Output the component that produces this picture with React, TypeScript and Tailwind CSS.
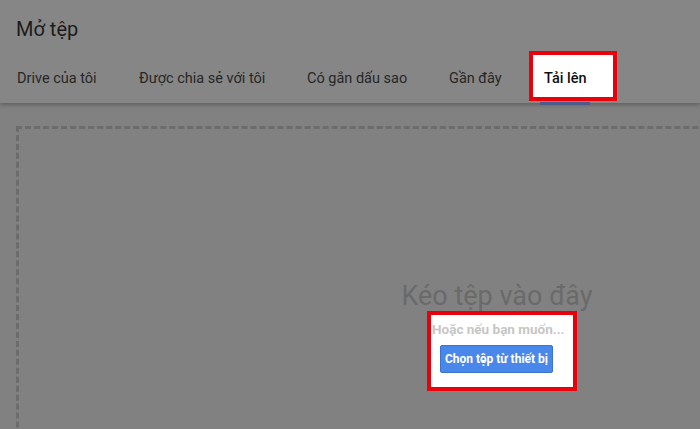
import React from "react";

export default function App() {
  const tabs: [string, string][] = [
    ["Drive của tôi", "w-[122px]"],
    ["Được chia sẻ với tôi", "w-[168px]"],
    ["Có gắn dấu sao", "w-[142px]"],
    ["Gần đây", "w-[80px]"],
  ];
  return (
    <div
      className="relative w-[700px] h-[429px] overflow-hidden bg-[#818181]"
      style={{ fontFamily: "Roboto, 'Noto Sans', sans-serif" }}
    >
      <div className="relative z-10 h-[103px] bg-[#868686] shadow-[0_2px_4px_rgba(0,0,0,0.25)]">
        <div className="pl-4 pt-[14px] h-[60px] text-[20px] leading-[30px] text-[#1c1c1c]">Mở tệp</div>
        <div className="flex items-start pl-[17px] text-[14.5px] leading-[20px] text-[#262626]">
          {tabs.map(([t, w]) => (
            <div key={t} className={`pt-[9px] shrink-0 ${w}`}>{t}</div>
          ))}
          <div className="relative mt-[-9px] w-[88px] h-[50px] border-4 border-[#e8000b] bg-white flex justify-start pl-[11px] shrink-0">
            <span className="pt-[14px] font-medium text-[#111]">Tải lên</span>
            <div className="absolute left-[7px] top-[47px] w-[50px] h-[3px] bg-[#4c5a8c]" />
          </div>
        </div>
      </div>
      <div className="pl-4 pt-[23px]">
        <div className="w-[962px] h-[400px] border-[3px] border-dashed border-[#6c6c6c] flex flex-col items-center pt-[151px]">
          <div className="text-[27px] leading-[32px] text-[#6a6a6a]">Kéo tệp vào đây</div>
          <div className="mt-[-1px] ml-[10px] w-[150px] h-[80px] border-4 border-[#e8000b] bg-white flex flex-col items-start">
            <div className="pt-[6px] pl-[1px] text-[13.5px] leading-[16px] font-bold text-[#c6c6c6] whitespace-nowrap">Hoặc nếu bạn muốn...</div>
            <button className="mt-[8px] ml-[9px] w-[113px] h-[28px] rounded-[2px] bg-[#4a87ea] border border-[#3b73d0] text-white text-[12px] font-bold whitespace-nowrap">
              Chọn tệp từ thiết bị
            </button>
          </div>
        </div>
      </div>
    </div>
  );
}
